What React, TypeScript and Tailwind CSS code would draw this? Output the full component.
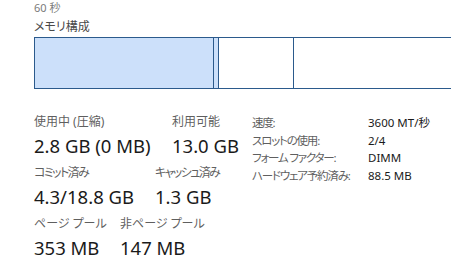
function Stat({ label, value, w, tight }: { label: string; value: string; w: string; tight?: boolean }) {
  return (
    <div className={`flex flex-col ${w}`}>
      <div
        className={`text-[12px] leading-[16px] text-[#5f5f5f] whitespace-nowrap ${tight ? "tracking-[-1.6px]" : ""}`}
      >
        {label}
      </div>
      <div className="text-[18.5px] leading-[24px] mt-[4px] text-[#1a1a1a] whitespace-nowrap">{value}</div>
    </div>
  );
}

export default function App() {
  const specs = [
    ["速度:", "3600 MT/秒"],
    ["スロットの使用:", "2/4"],
    ["フォーム ファクター:", "DIMM"],
    ["ハードウェア予約済み:", "88.5 MB"],
  ];

  return (
    <div className="w-[451px] h-[271px] bg-white overflow-hidden pl-[34px] font-['Noto_Sans','Noto_Sans_CJK_JP',sans-serif] [font-feature-settings:'palt']">
      <div className="text-[11px] leading-[14px] pt-[1px] text-[#7a7a7a]">60 秒</div>
      <div className="text-[12px] leading-[16px] mt-[4px] text-[#4a4a4a]">メモリ構成</div>
      <div className="mt-[2px] w-[440px] h-[52px] border border-[#2b5a8c] flex">
        <div className="w-[179px] bg-[#cce0fa] border-r border-[#2b5a8c]" />
        <div className="w-[5px] bg-[#cce0fa] border-r border-[#2b5a8c]" />
        <div className="w-[75px] border-r border-[#2b5a8c]" />
        <div className="flex-1" />
      </div>

      <div className="flex mt-[25px]">
        <div className="flex flex-col gap-[7px] w-[218px]">
          <div className="flex">
            <Stat w="w-[138px]" label="使用中 (圧縮)" value="2.8 GB (0 MB)" />
            <Stat w="w-[70px]" label="利用可能" value="13.0 GB" />
          </div>
          <div className="flex">
            <Stat w="w-[121px]" tight label="コミット済み" value="4.3/18.8 GB" />
            <Stat w="w-[70px]" tight label="キャッシュ済み" value="1.3 GB" />
          </div>
          <div className="flex">
            <Stat w="w-[86px]" label="ページ プール" value="353 MB" />
            <Stat w="w-[80px]" label="非ページ プール" value="147 MB" />
          </div>
        </div>
        <div className="flex flex-col text-[11.5px] leading-[17.6px] text-[#5f5f5f] mt-0">
          {specs.map(([k, v]) => (
            <div key={k} className="flex whitespace-nowrap">
              <div className="w-[116px] tracking-[-1.2px]">{k}</div>
              <div className="text-[#1a1a1a]">{v}</div>
            </div>
          ))}
        </div>
      </div>
    </div>
  );
}
